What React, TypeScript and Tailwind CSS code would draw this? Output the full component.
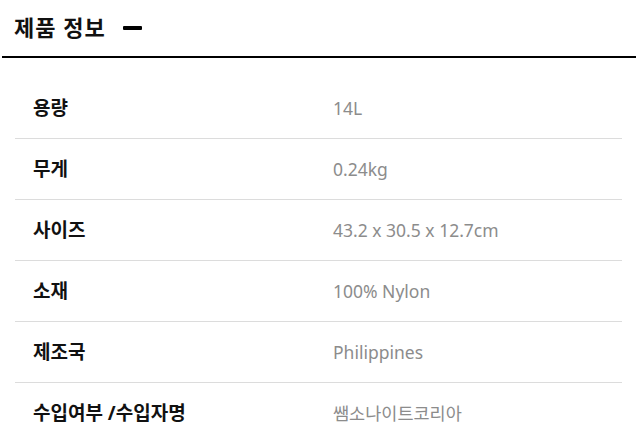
import React from 'react';

const specs = [
    { label: '용량', value: '14L' },
    { label: '무게', value: '0.24kg' },
    { label: '사이즈', value: '43.2 x 30.5 x 12.7cm' },
    { label: '소재', value: '100% Nylon' },
    { label: '제조국', value: 'Philippines' },
    { label: '수입여부 /수입자명', value: '쌤소나이트코리아' },
];

export default function App() {
    return (
        <div className="w-[639px] h-[442px] overflow-hidden bg-white font-['Noto_Sans','Noto_Sans_CJK_KR',sans-serif]">
            <div className="ml-[2px] mr-[3px] border-b-2 border-black h-[58px] flex items-center pl-[12px] pb-[2px]">
                <h2 className="text-[22px] font-semibold text-[#111] tracking-[1px]">제품 정보</h2>
                <span className="ml-[17px] mt-[2px] w-[19px] h-[4px] bg-black rounded-[1px]" />
            </div>
            <div className="mt-[20px] ml-[15px] w-[607px]">
                {specs.map((s, i) => (
                    <div key={s.label} className={`h-[61px] flex items-center ${i < specs.length - 1 ? 'border-b border-[#dcdcdc]' : ''}`}>
                        <div className="w-[318px] pl-[18px] text-[19px] font-bold text-[#111]">{s.label}</div>
                        <div className="text-[17.5px] font-normal text-[#8c8c8c]">{s.value}</div>
                    </div>
                ))}
            </div>
        </div>
    );
}
